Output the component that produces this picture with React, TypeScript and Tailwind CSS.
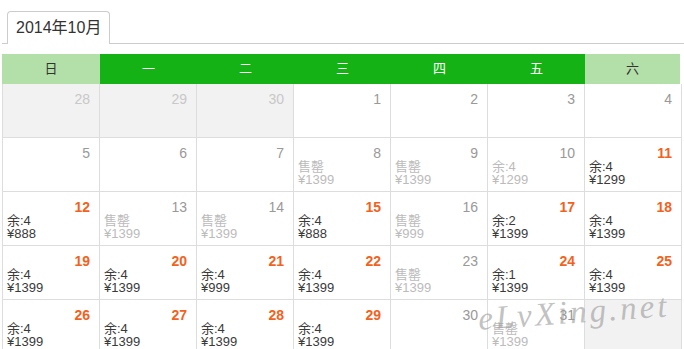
import React from "react";

type Day = {
  n: number;
  state?: "prev" | "none" | "open" | "soldout" | "dim" | "next";
  stock?: number;
  price?: number;
};

const weekdays = ["日", "一", "二", "三", "四", "五", "六"];

const days: Day[] = [
  { n: 28, state: "prev" },
  { n: 29, state: "prev" },
  { n: 30, state: "prev" },
  { n: 1 },
  { n: 2 },
  { n: 3 },
  { n: 4 },
  { n: 5 },
  { n: 6 },
  { n: 7 },
  { n: 8, state: "soldout", price: 1399 },
  { n: 9, state: "soldout", price: 1399 },
  { n: 10, state: "dim", stock: 4, price: 1299 },
  { n: 11, state: "open", stock: 4, price: 1299 },
  { n: 12, state: "open", stock: 4, price: 888 },
  { n: 13, state: "soldout", price: 1399 },
  { n: 14, state: "soldout", price: 1399 },
  { n: 15, state: "open", stock: 4, price: 888 },
  { n: 16, state: "soldout", price: 999 },
  { n: 17, state: "open", stock: 2, price: 1399 },
  { n: 18, state: "open", stock: 4, price: 1399 },
  { n: 19, state: "open", stock: 4, price: 1399 },
  { n: 20, state: "open", stock: 4, price: 1399 },
  { n: 21, state: "open", stock: 4, price: 999 },
  { n: 22, state: "open", stock: 4, price: 1399 },
  { n: 23, state: "soldout", price: 1399 },
  { n: 24, state: "open", stock: 1, price: 1399 },
  { n: 25, state: "open", stock: 4, price: 1399 },
  { n: 26, state: "open", stock: 4, price: 1399 },
  { n: 27, state: "open", stock: 4, price: 1399 },
  { n: 28, state: "open", stock: 4, price: 1399 },
  { n: 29, state: "open", stock: 4, price: 1399 },
  { n: 30 },
  { n: 31, state: "soldout", price: 1399 },
  { n: 0, state: "next" },
];

function Cell({ d }: { d: Day }) {
  const grey = d.state === "prev" || d.state === "next";
  const open = d.state === "open";
  return (
    <div
      className={`h-[54px] border-r border-b border-[#dddddd] pt-[8px] pl-[4px] pr-[9px] ${
        grey ? "bg-[#f2f2f2]" : "bg-white"
      }`}
    >
      {d.n > 0 && (
        <div
          className={`text-right text-[14px] leading-[14px] ${
            open ? "font-bold text-[#f2621c]" : d.state === "prev" ? "text-[#c8c8c8]" : "text-[#999999]"
          }`}
        >
          {d.n}
        </div>
      )}
      {d.price && (
        <div
          className={`text-[13px] leading-[13px] ${open ? "text-[#3a3a3a]" : "text-[#bbbbbb]"}`}
        >
          <div>{d.state === "soldout" ? "售罄" : `余:${d.stock}`}</div>
          <div>¥{d.price}</div>
        </div>
      )}
    </div>
  );
}

export default function App() {
  return (
    <div className="relative w-[684px] h-[349px] overflow-hidden bg-white font-['Liberation_Sans','Noto_Sans_CJK_SC',sans-serif]">
      {/* 月份标签 */}
      <div className="pt-[11px] pl-[2px]">
        <div className="flex items-end h-[33px] border-b border-[#cccccc]">
          <div className="ml-[5px] -mb-px h-[33px] flex items-center px-[8px] border border-b-0 border-[#cccccc] rounded-t-[4px] bg-white text-[16px] text-[#333333]">
            2014年10月
          </div>
        </div>
      </div>

      {/* 星期 */}
      <div className="mt-[10px] ml-[2px] grid grid-cols-[98px_repeat(5,97px)_95px] h-[30px] text-[13px]">
        {weekdays.map((w, i) => {
          const weekend = i === 0 || i === 6;
          return (
            <div
              key={w}
              className={`flex items-center justify-center ${
                weekend ? "bg-[#b3dfa9] text-[#333333]" : "bg-[#14b214] text-white"
              }`}
            >
              {w}
            </div>
          );
        })}
      </div>

      {/* 日期 */}
      <div className="ml-[2px] w-fit grid grid-cols-[repeat(7,97px)] border-l border-[#dddddd]">
        {days.map((d, i) => (
          <Cell key={i} d={d} />
        ))}
      </div>

      {/* 水印 */}
      <div className="absolute left-[478px] top-[296px] -rotate-[4deg] italic font-['Liberation_Serif',serif] text-[33px] leading-[33px] tracking-[3px] text-[#999999]/60">
        eLvXing.net
      </div>
    </div>
  );
}
